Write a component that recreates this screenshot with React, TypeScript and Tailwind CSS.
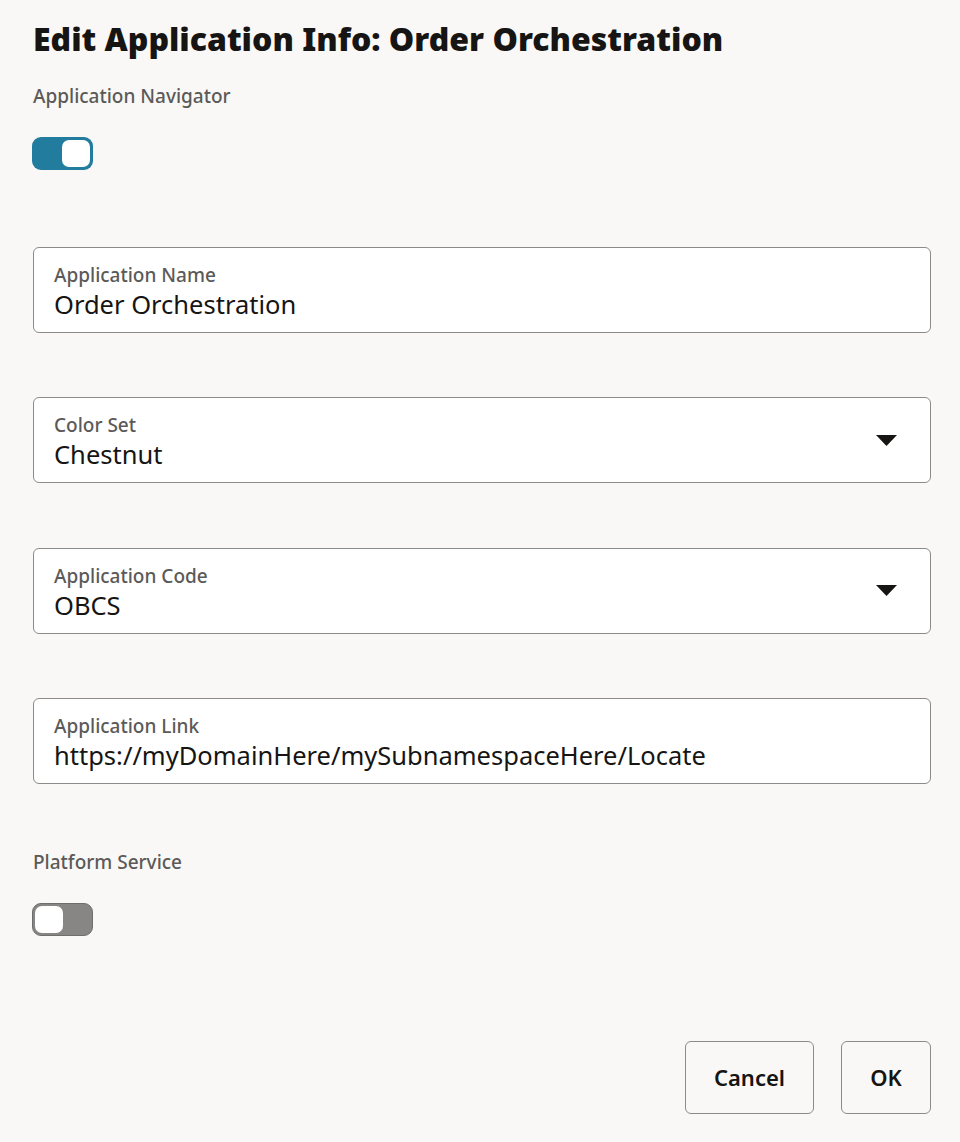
import React from "react";

function Toggle({ on }: { on: boolean }) {
  return (
    <div
      className={
        on
          ? "w-[61px] h-[33px] rounded-[9px] bg-[#227c9d] p-[3px] flex justify-end"
          : "w-[61px] h-[33px] rounded-[9px] bg-[#878684] border-[1px] border-[#6f6e6c] p-[2px] flex justify-start"
      }
    >
      <div className="w-[28px] h-full rounded-[7px] bg-white" />
    </div>
  );
}

function Field({ label, value, select }: { label: string; value: string; select?: boolean }) {
  return (
    <div className="h-[86px] rounded-[6px] border border-[#8c8b89] bg-white flex items-center pl-[20px] pr-[33px]">
      <div className="flex-1 flex flex-col pt-[2px]">
        <span className="text-[19px] leading-[26px] font-medium text-[#5b5a58]">{label}</span>
        <span className="text-[25.5px] leading-[32px] text-[#161513]">{value}</span>
      </div>
      {select && (
        <svg width="21" height="11" viewBox="0 0 21 11" className="shrink-0">
          <path d="M0 0 H21 L10.5 11 Z" fill="#161513" />
        </svg>
      )}
    </div>
  );
}

export default function App() {
  return (
    <div
      className="w-[960px] h-[1142px] bg-[#f9f8f6] pl-[33px] pr-[29px] pt-[18px] flex flex-col"
      style={{ fontFamily: '"Noto Sans", "Open Sans", sans-serif' }}
    >
      {/* Header */}
      <h1 className="text-[32px] leading-[42px] font-black text-[#161513]">
        Edit Application Info: Order Orchestration
      </h1>

      <div className="mt-[24px] text-[19px] leading-[24px] font-medium text-[#5b5a58]">
        Application Navigator
      </div>
      <div className="mt-[29px] -ml-px">
        <Toggle on />
      </div>

      {/* Fields */}
      <div className="mt-[77px] flex flex-col gap-[64.3px]">
        <Field label="Application Name" value="Order Orchestration" />
        <Field label="Color Set" value="Chestnut" select />
        <Field label="Application Code" value="OBCS" select />
        <Field label="Application Link" value="https://myDomainHere/mySubnamespaceHere/Locate" />
      </div>

      <div className="mt-[66px] text-[19px] leading-[24px] font-medium text-[#5b5a58]">
        Platform Service
      </div>
      <div className="mt-[29px] -ml-px">
        <Toggle on={false} />
      </div>

      {/* Footer */}
      <div className="mt-auto mb-[28px] flex justify-end gap-[27px]">
        <button className="w-[129px] h-[73px] rounded-[6px] border border-[#8c8b89] bg-[#f9f8f6] text-[22px] font-semibold text-[#161513]">
          Cancel
        </button>
        <button className="w-[90px] h-[73px] rounded-[6px] border border-[#8c8b89] bg-[#f9f8f6] text-[22px] font-semibold text-[#161513]">
          OK
        </button>
      </div>
    </div>
  );
}
